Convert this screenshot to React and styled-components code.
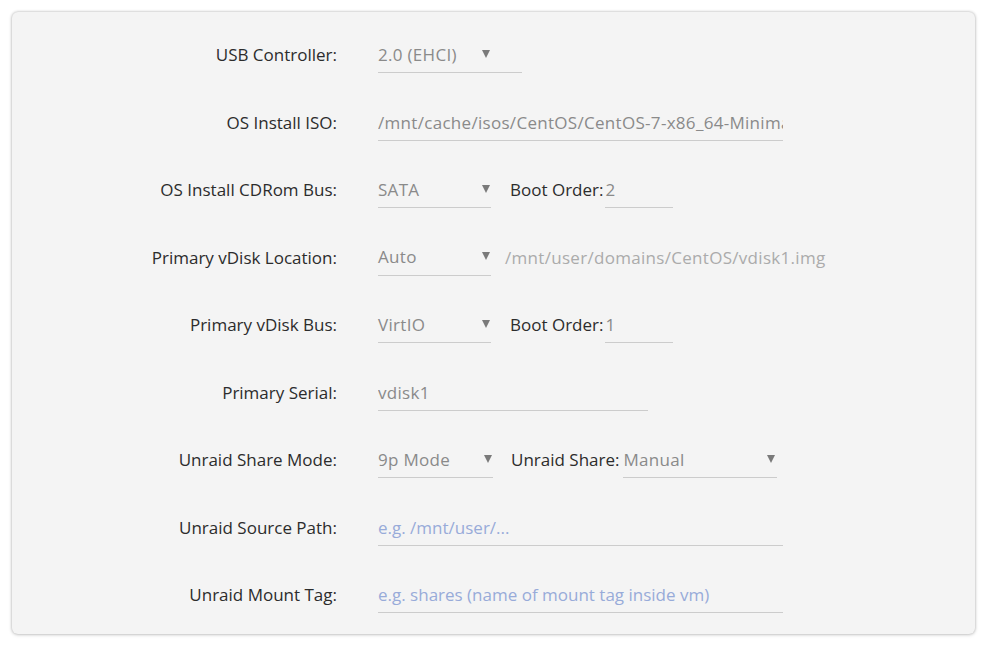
import React from 'react'
import styled, { createGlobalStyle } from 'styled-components'

const GlobalStyle = createGlobalStyle`
  html, body {
    margin: 0;
    padding: 0;
    background: #ffffff;
  }
  body {
    font-family: "Open Sans", "Noto Sans", "Liberation Sans", sans-serif;
    font-size: 17px;
  }
`

const Page = styled.div`
  padding: 12px 12px 12px 12px;
`

const Card = styled.div`
  width: 963px;
  box-sizing: border-box;
  background: #f4f4f4;
  border-radius: 6px;
  box-shadow: 0 0 3px rgba(0, 0, 0, 0.28), 0 1px 4px rgba(0, 0, 0, 0.12);
  padding: 9px 0 5px 0;
`

const Row = styled.div`
  display: grid;
  grid-template-columns: 325px 1fr;
  column-gap: 41px;
  height: 67.5px;
  align-items: center;
`

const Label = styled.div`
  text-align: right;
  color: #2c2c2c;
  white-space: nowrap;
`

const Controls = styled.div`
  display: flex;
  align-items: center;
`

const Field = styled.div`
  box-sizing: border-box;
  width: ${p => p.$w}px;
  height: 37px;
  line-height: 37px;
  border-bottom: 1px solid #cccccc;
  color: ${p => (p.$placeholder ? '#98abd9' : '#8a8a8a')};
  letter-spacing: ${p => (p.$placeholder ? '0px' : '0.3px')};
  white-space: nowrap;
  overflow: hidden;
`

const Select = styled.div`
  box-sizing: border-box;
  width: ${p => p.$w}px;
  height: 37px;
  line-height: 37px;
  border-bottom: 1px solid #cccccc;
  color: #8a8a8a;
  letter-spacing: 0.3px;
  display: flex;
  align-items: center;
  padding-right: ${p => p.$arrowPad || 1}px;
  white-space: nowrap;
`

const Arrow = styled.span`
  margin-left: auto;
  width: 0;
  height: 0;
  border-left: 4px solid transparent;
  border-right: 4px solid transparent;
  border-top: 8px solid #7a7a7a;
  margin-top: -1px;
`

const InlineLabel = styled.span`
  color: #2c2c2c;
  margin-left: ${p => p.$ml}px;
  margin-right: ${p => p.$mr}px;
  white-space: nowrap;
`

const Note = styled.span`
  color: #ababab;
  letter-spacing: 0.3px;
  margin-left: 14px;
  white-space: nowrap;
`

const App = () => (
  <Page>
    <GlobalStyle />
    <Card>
      <Row>
        <Label>USB Controller:</Label>
        <Controls>
          <Select $w={144} $arrowPad={32}>2.0 (EHCI)<Arrow /></Select>
        </Controls>
      </Row>
      <Row>
        <Label>OS Install ISO:</Label>
        <Controls>
          <Field $w={405}>/mnt/cache/isos/CentOS/CentOS-7-x86_64-Minimal-1611.iso</Field>
        </Controls>
      </Row>
      <Row>
        <Label>OS Install CDRom Bus:</Label>
        <Controls>
          <Select $w={113}>SATA<Arrow /></Select>
          <InlineLabel $ml={19} $mr={2}>Boot Order:</InlineLabel>
          <Field $w={68}>2</Field>
        </Controls>
      </Row>
      <Row>
        <Label>Primary vDisk Location:</Label>
        <Controls>
          <Select $w={113}>Auto<Arrow /></Select>
          <Note>/mnt/user/domains/CentOS/vdisk1.img</Note>
        </Controls>
      </Row>
      <Row>
        <Label>Primary vDisk Bus:</Label>
        <Controls>
          <Select $w={113}>VirtIO<Arrow /></Select>
          <InlineLabel $ml={19} $mr={2}>Boot Order:</InlineLabel>
          <Field $w={68}>1</Field>
        </Controls>
      </Row>
      <Row>
        <Label>Primary Serial:</Label>
        <Controls>
          <Field $w={270}>vdisk1</Field>
        </Controls>
      </Row>
      <Row>
        <Label>Unraid Share Mode:</Label>
        <Controls>
          <Select $w={115}>9p Mode<Arrow /></Select>
          <InlineLabel $ml={18} $mr={4}>Unraid Share:</InlineLabel>
          <Select $w={154} $arrowPad={2}>Manual<Arrow /></Select>
        </Controls>
      </Row>
      <Row>
        <Label>Unraid Source Path:</Label>
        <Controls>
          <Field $w={405} $placeholder>e.g. /mnt/user/...</Field>
        </Controls>
      </Row>
      <Row>
        <Label>Unraid Mount Tag:</Label>
        <Controls>
          <Field $w={405} $placeholder>e.g. shares (name of mount tag inside vm)</Field>
        </Controls>
      </Row>
    </Card>
  </Page>
)

export default App
